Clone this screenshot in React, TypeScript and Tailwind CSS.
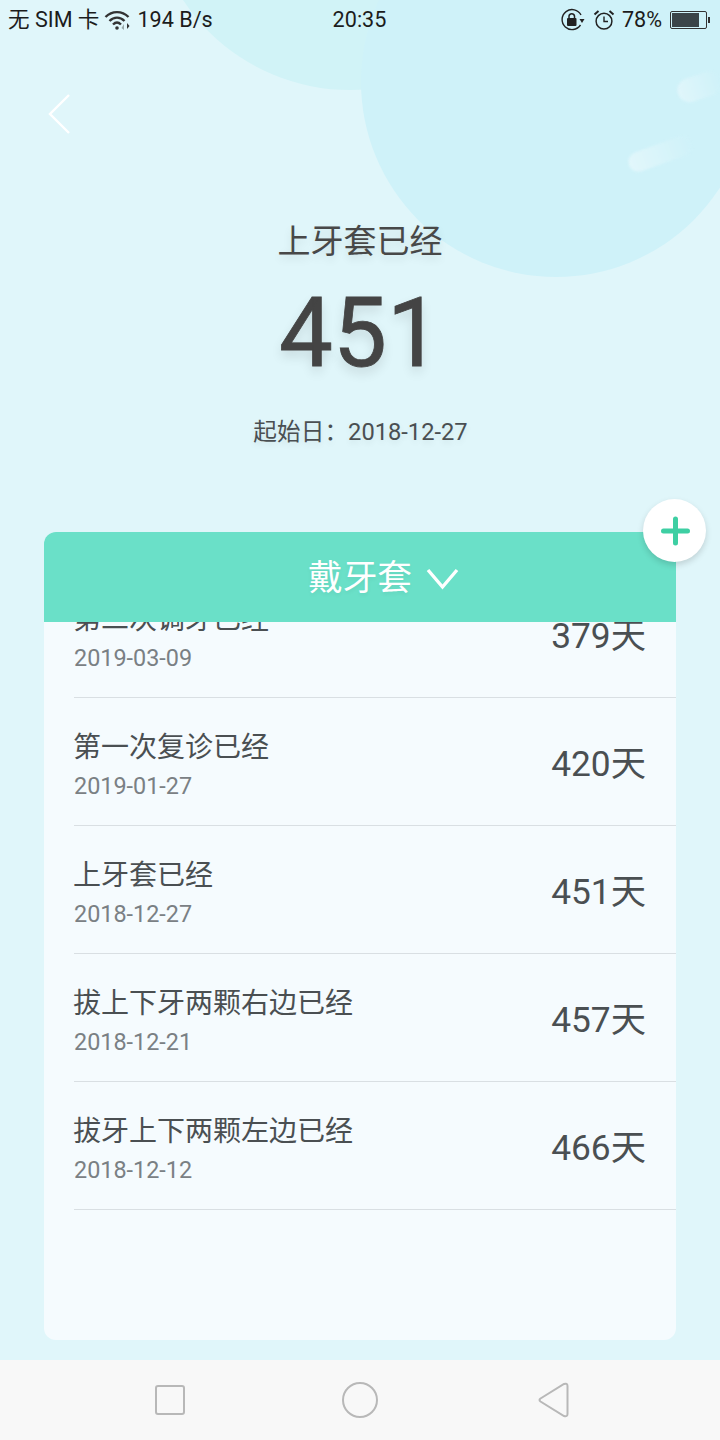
import React from "react";

const rows = [
  ["第二次调牙已经", "2019-03-09", "379天"],
  ["第一次复诊已经", "2019-01-27", "420天"],
  ["上牙套已经", "2018-12-27", "451天"],
  ["拔上下牙两颗右边已经", "2018-12-21", "457天"],
  ["拔牙上下两颗左边已经", "2018-12-12", "466天"],
];

function Wifi() {
  return (
    <svg width="28" height="22" viewBox="0 0 28 22" fill="none" className="ml-[5px]">
      <path d="M1.5 8 C8 1.5 18 1.5 24.5 8" stroke="#333" strokeWidth="2.4" />
      <path d="M5.5 12 C10 7.5 16 7.5 20.5 12" stroke="#333" strokeWidth="2.4" />
      <path d="M9 15.5 C11.5 13 14.5 13 17 15.5" stroke="#333" strokeWidth="2.4" />
      <circle cx="13" cy="19" r="1.8" fill="#333" />
      <path d="M20 21 V15 L17.5 19 Z" fill="#9aa" />
      <path d="M23 14 V20 L25.5 17 Z" fill="#333" />
    </svg>
  );
}

function RotationLock() {
  return (
    <svg width="25" height="24" viewBox="0 0 25 24" fill="none">
      <path d="M21 7 A10 10 0 1 0 20.5 17" stroke="#222" strokeWidth="1.4" />
      <path d="M19.5 11 H24.5 L22 15 Z" fill="#222" />
      <rect x="7" y="10" width="9.5" height="8" rx="1" fill="#222" />
      <path d="M9 10 V8 A2.8 2.8 0 0 1 14.5 8 V10" stroke="#222" strokeWidth="1.5" />
    </svg>
  );
}

function Alarm() {
  return (
    <svg width="22" height="22" viewBox="0 0 22 22" fill="none">
      <circle cx="11" cy="12.2" r="7.9" stroke="#222" strokeWidth="1.5" />
      <path d="M11 7.5 V12.5 H15" stroke="#222" strokeWidth="1.4" />
      <path d="M1.5 5.5 L5.5 2 M20.5 5.5 L16.5 2" stroke="#222" strokeWidth="2" />
    </svg>
  );
}

function Battery() {
  return (
    <div className="ml-[8px] flex items-center">
      <div className="flex h-[18px] w-[37px] items-center rounded-[2px] border border-[#333] p-[1px]">
        <div className="h-full w-[27px] bg-[#3b4448]" />
      </div>
      <div className="ml-[1px] h-[6px] w-[2px] bg-[#333]" />
    </div>
  );
}

export default function App() {
  return (
    <div className="relative flex h-[1440px] w-[720px] flex-col overflow-hidden bg-[#e0f6fa] font-['Roboto','Noto_Sans_CJK_SC',sans-serif]">
      <div className="absolute left-[150px] top-[-310px] h-[400px] w-[400px] rounded-full bg-[#d1f3f7]" />
      <div className="absolute left-[361px] top-[-113px] h-[390px] w-[390px] rounded-full bg-[#cff2f9]" />
      <div className="absolute left-[677px] top-[75px] h-[24px] w-[44px] -rotate-[18deg] rounded-full bg-gradient-to-r from-[#e0f6fb] to-[#cff2f9] blur-[1px]" />
      <div className="absolute left-[627px] top-[144px] h-[20px] w-[66px] -rotate-[20deg] rounded-full bg-gradient-to-r from-[#e2f7fb] to-[#cff2f9] blur-[1px]" />

      <div className="relative flex h-[38px] shrink-0 items-center justify-between pl-[8px] pr-[10px] pt-[1px] text-[21.6px] leading-[38px] text-[#1c1c1c]">
        <div className="flex w-[260px] items-center">
          <span>无 SIM 卡</span>
          <Wifi />
          <span className="ml-[5px]">194 B/s</span>
        </div>
        <span className="ml-[1px]">20:35</span>
        <div className="flex w-[260px] items-center justify-end">
          <RotationLock />
          <span className="ml-[8px] flex"><Alarm /></span>
          <span className="ml-[7px]">78%</span>
          <Battery />
        </div>
      </div>

      <div className="relative flex h-[494px] shrink-0 flex-col items-center">
        <svg width="26" height="42" viewBox="0 0 26 42" fill="none" className="absolute left-[47px] top-[55px]">
          <path d="M22 2 L3 21 L22 40" stroke="#fff" strokeWidth="2.4" />
        </svg>
        <div className="mt-[183px] text-[33px] leading-[42px] text-[#484848] [text-shadow:0_4px_8px_rgba(0,0,0,0.1)]">上牙套已经</div>
        <div className="mt-[20px] text-[96px] leading-[100px] text-[#444444] [-webkit-text-stroke:0.8px_#444444] [text-shadow:0_6px_12px_rgba(0,0,0,0.12)]">451</div>
        <div className="ml-[1px] mt-[33px] text-[23.7px] leading-[32px] text-[#4a4f52] [text-shadow:0_3px_6px_rgba(0,0,0,0.08)]">起始日：2018-12-27</div>
      </div>

      <div className="relative mx-[44px] flex h-[808px] shrink-0 flex-col overflow-hidden rounded-[12px] bg-[#f5fbfe]">
        <div className="relative flex h-[90px] shrink-0 items-center justify-center bg-[#6ae0c8] pt-[2px]">
          <span className="relative text-[34.7px] leading-[42px] text-white [text-shadow:0_2px_4px_rgba(0,0,0,0.06)]">
            戴牙套
            <svg width="36" height="24" viewBox="0 0 36 24" fill="none" className="absolute left-[117px] top-[10px]">
              <path d="M3 3 L17.5 20 L32 3" stroke="#fff" strokeWidth="3.4" />
            </svg>
          </span>
        </div>
        <div className="-mt-[52px] flex flex-col">
          {rows.map(([name, date, days]) => (
            <div key={date} className="ml-[30px] flex h-[128px] items-center justify-between border-b border-[#d9dfe3] pr-[30px]">
              <div className="-ml-[1px] flex flex-col pt-[9px]">
                <span className="text-[28px] leading-[36px] text-[#4a4f52]">{name}</span>
                <span className="ml-[1px] mt-[4px] text-[23.4px] leading-[32px] text-[#7a8084]">{date}</span>
              </div>
              <span className="pt-[5px] text-[35.3px] leading-[44px] text-[#4a4f52]">{days}</span>
            </div>
          ))}
        </div>
      </div>

      <div className="absolute left-[643px] top-[499px] flex h-[63px] w-[63px] items-center justify-center rounded-full bg-white shadow-[0_3px_6px_rgba(0,0,0,0.15)]">
        <svg width="30" height="30" viewBox="0 0 30 30" fill="none" className="translate-x-[0.5px]">
          <path d="M15 3 V27 M3 15 H27" stroke="#3ecfa3" strokeWidth="5" strokeLinecap="round" />
        </svg>
      </div>

      <div className="mt-[20px] flex h-[80px] shrink-0 items-center bg-[#f8f8f8] pl-[155px]">
        <div className="h-[30px] w-[30px] rounded-[3px] border-2 border-[#b8b8b8]" />
        <div className="ml-[157px] h-[36px] w-[36px] rounded-full border-2 border-[#b8b8b8]" />
        <svg width="32" height="36" viewBox="0 0 32 36" fill="none" className="ml-[160px]">
          <path d="M2.5 16.5 L26 2 Q29.5 0.8 29.5 4 V32 Q29.5 35 26 34 L2.5 19.5 Q0.5 18 2.5 16.5 Z" stroke="#b8b8b8" strokeWidth="2" />
        </svg>
      </div>
    </div>
  );
}
